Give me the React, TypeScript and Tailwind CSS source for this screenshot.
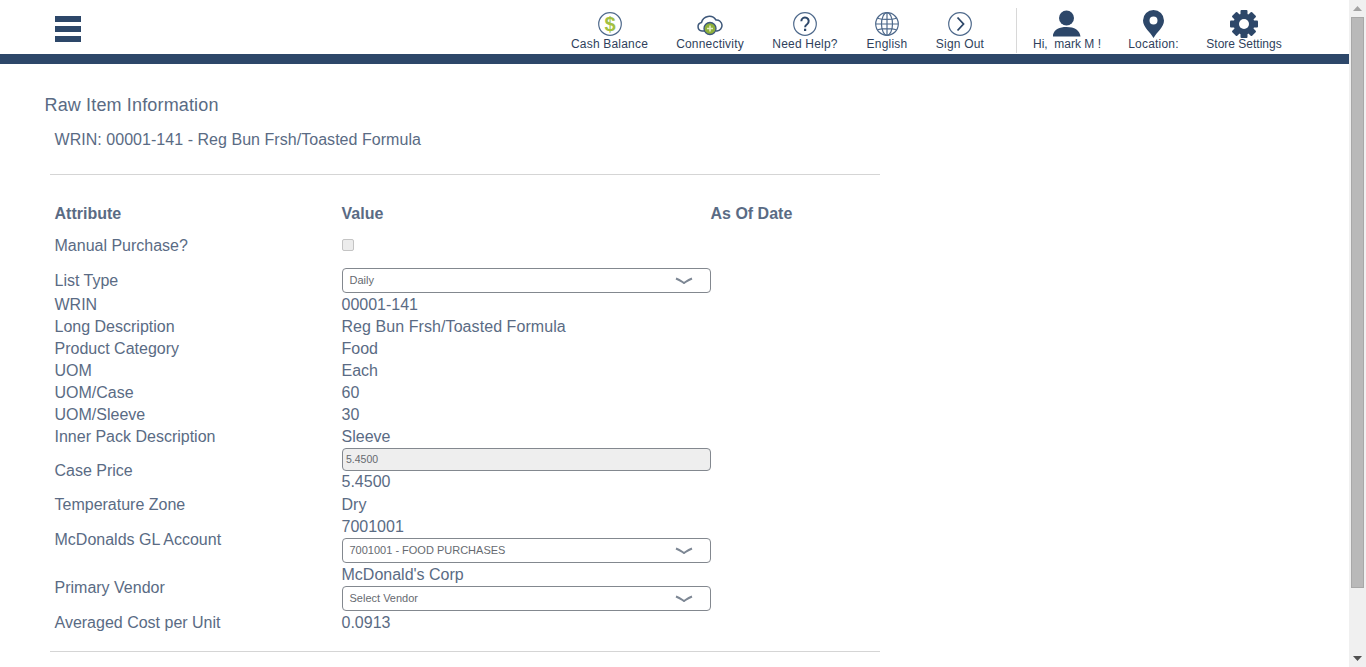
import type { ReactNode } from 'react';

const NAVY = '#2d4769';

function CashIcon() {
    return (
        <svg width="26" height="26" viewBox="0 0 26 26">
            <circle cx="13" cy="13" r="11.3" fill="#fff" stroke="#4f6a8c" strokeWidth="1.2" />
            <text x="13" y="20" textAnchor="middle" fontSize="20" fontWeight="700" fontFamily="Liberation Sans" fill="#a2c040">$</text>
        </svg>
    );
}

function CloudIcon() {
    return (
        <svg width="26" height="26" viewBox="0 0 26 26">
            <path d="M8 20H5A4.300 4.300 0 0 1 4.500 11.500A8 8 0 0 1 19 9A5.500 5.500 0 0 1 20 20H19" fill="#fff" stroke="#3d5779" strokeWidth="1.500" />
            <circle cx="13" cy="17.500" r="6" fill="#8fb03a" stroke="#3d5779" strokeWidth="1.300" />
            <path d="M13 14.500v6M10 17.500h6" stroke="#e6efc8" strokeWidth="1.500" />
        </svg>
    );
}

function HelpIcon() {
    return (
        <svg width="26" height="26" viewBox="0 0 26 26">
            <circle cx="13" cy="13" r="11.300" fill="#fff" stroke="#4f6a8c" strokeWidth="1.200" />
            <path d="M9.300 10.200a3.700 3.700 0 1 1 5.800 3c-1.300.9-2 1.500-2 3" fill="none" stroke={NAVY} strokeWidth="2" />
            <rect x="12" y="17.700" width="2.200" height="2.300" fill={NAVY} />
        </svg>
    );
}

function GlobeIcon() {
    return (
        <svg width="26" height="26" viewBox="0 0 26 26" fill="none" stroke="#4f6a8c" strokeWidth="1.200">
            <circle cx="13" cy="13" r="11.300" />
            <ellipse cx="13" cy="13" rx="5.500" ry="11.300" />
            <path d="M13 1.700v22.600M1.700 13h22.600M3.500 7.200c5 1.600 14 1.600 19 0M3.500 18.800c5-1.600 14-1.600 19 0" />
        </svg>
    );
}

function SignOutIcon() {
    return (
        <svg width="26" height="26" viewBox="0 0 26 26" fill="none">
            <circle cx="13" cy="13" r="11.300" stroke="#4f6a8c" strokeWidth="1.200" />
            <path d="M10.500 6.500 16.500 13l-6 6.500" stroke={NAVY} strokeWidth="1.800" />
        </svg>
    );
}

function UserIcon() {
    return (
        <svg width="28" height="27" viewBox="0.5 0 28 27" fill={NAVY}>
            <circle cx="14" cy="8" r="7.500" />
            <path d="M0 26.500C1 20 6 17 14 17s13 3 14 9.500z" />
        </svg>
    );
}

function PinIcon() {
    return (
        <svg width="22" height="28" viewBox="0.5 0 22 28">
            <path fillRule="evenodd" fill={NAVY} d="M11 28C8 22.500.500 17 .500 10.500a10.500 10.500 0 0 1 21 0C21.500 17 14 22.500 11 28zM11 6.500a4 4 0 1 0 0 8 4 4 0 0 0 0-8z" />
        </svg>
    );
}

function GearIcon() {
    const teeth = [0, 45, 90, 135];
    return (
        <svg width="28" height="28" viewBox="0 0 28 28">
            {teeth.map((deg) => (
                <rect key={deg} x="10.500" y="0" width="7" height="28" rx="1" fill={NAVY} transform={`rotate(${deg} 14 14)`} />
            ))}
            <circle cx="14" cy="14" r="10.500" fill={NAVY} />
            <circle cx="14" cy="14" r="5" fill="#fff" />
        </svg>
    );
}

function NavItem({ icon, label, width, spaced = true }: { icon: ReactNode; label: string; width: string; spaced?: boolean }) {
    return (
        <div className={`flex flex-col items-center h-[54px] pt-[9px] ${width}`}>
            <div className="h-[29px] flex items-center justify-center">{icon}</div>
            <span className={`text-[12px] leading-[14px] mt-[-1px] whitespace-pre text-[#2f3f5c] ${spaced ? 'tracking-[0.2px]' : ''}`}>{label}</span>
        </div>
    );
}

function Chevron() {
    return (
        <svg width="18" height="8" viewBox="0 0 18 8" fill="none" className="shrink-0">
            <path d="M1 1.500C6 3.500 7 5 9 6c2-1 3-2.500 8-4.500" stroke="#7d8794" strokeWidth="2" />
        </svg>
    );
}

function SelectBox({ value }: { value: string }) {
    return (
        <div className="h-[25px] w-[369px] mb-[1px] flex items-center justify-between pl-[7px] pr-[17px] bg-white border border-[#83888f] rounded-[4px]">
            <span className="text-[11px] text-[#666a70] pb-[2px]">{value}</span>
            <Chevron />
        </div>
    );
}

function Row({ label, children, h = 22 }: { label: string; children?: ReactNode; h?: number }) {
    return (
        <div className="grid grid-cols-[287px_369px] items-center" style={{ minHeight: h }}>
            <div>{label}</div>
            <div>{children}</div>
        </div>
    );
}

export default function App() {
    return (
        <div className="flex h-[667px] overflow-hidden bg-white font-['Liberation_Sans',Arial,sans-serif] text-[16px] leading-[22px] text-[#5a6b84]">
            <div className="flex-1 min-w-0">
                <header className="h-[54px] flex justify-between">
                    <div className="ml-[55px] mt-[16px] flex flex-col gap-[4px]">
                        <span className="block w-[26px] h-[6px] bg-[#2d4769]" />
                        <span className="block w-[26px] h-[6px] bg-[#2d4769]" />
                        <span className="block w-[26px] h-[6px] bg-[#2d4769]" />
                    </div>
                    <nav className="flex items-start mr-[67px]">
                        <div className="flex gap-[28.5px]">
                            <NavItem icon={<CashIcon />} label="Cash Balance" width="w-[77px]" />
                            <NavItem icon={<CloudIcon />} label="Connectivity" width="w-[67px]" />
                            <NavItem icon={<HelpIcon />} label="Need Help?" width="w-[66px]" />
                            <NavItem icon={<GlobeIcon />} label="English" width="w-[41px]" />
                            <NavItem icon={<SignOutIcon />} label="Sign Out" width="w-[48px]" />
                        </div>
                        <div className="ml-[32px] mt-[8px] h-[45px] w-px bg-[#d8d8d8]" />
                        <div className="ml-[16px] flex gap-[27px]">
                            <NavItem icon={<UserIcon />} label="Hi,  mark M !" width="w-[68px]" spaced={false} />
                            <NavItem icon={<PinIcon />} label="Location:" width="w-[51px]" />
                            <NavItem icon={<GearIcon />} label="Store Settings" width="w-[76px]" spaced={false} />
                        </div>
                    </nav>
                </header>
                <div className="h-[10px] bg-[#2d4769]" />

                <main className="pl-[44.5px]">
                    <h1 className="mt-[30px] text-[18px] leading-[22px] tracking-[0.15px]">Raw Item Information</h1>
                    <p className="mt-[13px] ml-[10px] tracking-[0.04px]">WRIN: 00001-141 - Reg Bun Frsh/Toasted Formula</p>

                    <div className="mt-[23px] ml-[5.5px] w-[830px] border-t border-b border-[#d5d5d5] pl-[4.5px] pt-[28px] pb-[17px]">
                        <div className="grid grid-cols-[287px_369px_1fr] items-center font-bold min-h-[22px]">
                            <div>Attribute</div>
                            <div>Value</div>
                            <div>As Of Date</div>
                        </div>
                        <Row label="Manual Purchase?" h={42}>
                            <div className="w-[12px] h-[12px] mt-[-2px] rounded-[2px] border border-[#c4c4c4] bg-[#ececec]" />
                        </Row>
                        <div className="mt-[1px]">
                            <Row label="List Type" h={25}>
                                <SelectBox value="Daily" />
                            </Row>
                        </div>
                        <Row label="WRIN">00001-141</Row>
                        <Row label="Long Description"><span className="tracking-[0.07px]">Reg Bun Frsh/Toasted Formula</span></Row>
                        <Row label="Product Category">Food</Row>
                        <Row label="UOM">Each</Row>
                        <Row label="UOM/Case">60</Row>
                        <Row label="UOM/Sleeve">30</Row>
                        <Row label="Inner Pack Description">Sleeve</Row>
                        <Row label="Case Price">
                            <div className="h-[23px] w-[369px] flex items-center pl-[3.5px] pb-[1px] bg-[#eeeeee] border border-[#83888f] rounded-[4px] text-[10.5px] text-[#666a70]">5.4500</div>
                            <div className="mb-[1px]">5.4500</div>
                        </Row>
                        <Row label="Temperature Zone">Dry</Row>
                        <Row label="McDonalds GL Account">
                            <div>7001001</div>
                            <SelectBox value="7001001 - FOOD PURCHASES" />
                        </Row>
                        <Row label="Primary Vendor">
                            <div>McDonald's Corp</div>
                            <SelectBox value="Select Vendor" />
                        </Row>
                        <Row label="Averaged Cost per Unit">0.0913</Row>
                    </div>
                </main>
            </div>

            {/* scrollbar */}
            <div className="w-[17px] shrink-0 bg-[#f0f0f0] flex flex-col items-center">
                <div className="h-[17px] flex items-center justify-center">
                    <svg width="9" height="5" viewBox="0 0 9 5"><path d="M4.500 0 9 5H0z" fill="#a3a3a3" /></svg>
                </div>
                <div className="w-[13px] h-[571px] bg-[#b9b9b9] border border-[#a8a8a8]" />
                <div className="flex-1" />
                <div className="h-[17px] flex items-center justify-center">
                    <svg width="9" height="5" viewBox="0 0 9 5"><path d="M0 0h9L4.500 5z" fill="#505050" /></svg>
                </div>
            </div>
        </div>
    );
}
